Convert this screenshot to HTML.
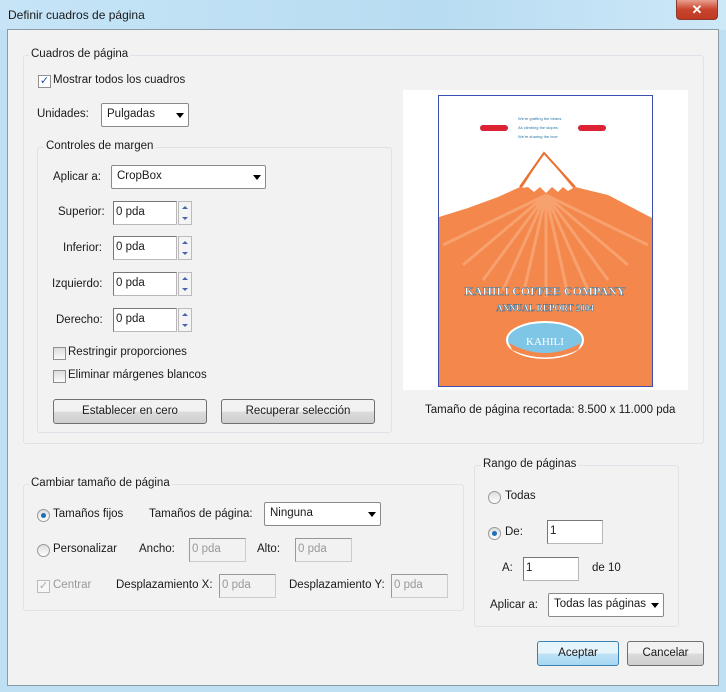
<!DOCTYPE html>
<html><head><meta charset="utf-8"><style>
*{box-sizing:border-box;margin:0;padding:0}
body{width:726px;height:692px;overflow:hidden;background:#bfe0f3;font-family:"Liberation Sans",sans-serif;font-size:11.5px;color:#1a1a1a;position:relative}
.a{position:absolute;white-space:nowrap}
.title{left:0;top:0;width:726px;height:30px;background:linear-gradient(90deg,#c6e4f6,#b8dcf2 60%,#cde8f7)}
.inner{left:7px;top:29px;width:712px;height:657px;background:#f2f2f2;border:1px solid #8a9aa6}
.grp{position:absolute;border:1px solid #dde3e8;border-radius:3px}
.lbl{position:absolute;background:#f2f2f2;padding:0 2px}
.sel{position:absolute;height:24px;background:#fff;border:1px solid #8a8a8a;border-radius:2px;padding:4px 5px}
.sel:after{content:"";position:absolute;right:4px;top:9px;border-left:4px solid transparent;border-right:4px solid transparent;border-top:5px solid #000}
.inp{position:absolute;height:24px;background:#fff;border:1px solid #b8b8b8;border-top-color:#777;border-left-color:#777;padding:4px 2px}
.dis{background:#f2f2f2;color:#999;border-color:#ccc;border-top-color:#999;border-left-color:#999}
.spin{position:absolute;width:14px;height:24px;border:1px solid #bbb;background:#f4f4f4}
.spin:before,.spin:after{content:"";position:absolute;left:3px;border-left:3px solid transparent;border-right:3px solid transparent}
.spin:before{top:4px;border-bottom:3px solid #46a}
.spin:after{bottom:4px;border-top:3px solid #46a}
.cb{position:absolute;width:13px;height:13px;border:1px solid #8f8f8f;background:linear-gradient(#ddd,#fafafa)}
.rd{position:absolute;width:13px;height:13px;border:1px solid #999;border-radius:50%;background:linear-gradient(#ddd,#fff)}
.rd.on:after{content:"";position:absolute;left:3px;top:3px;width:5px;height:5px;border-radius:50%;background:#1d6fb8}
.btn{position:absolute;height:25px;border:1px solid #707070;border-radius:3px;background:linear-gradient(#f2f2f2 50%,#dcdcdc 50%,#cfcfcf);text-align:center;line-height:23px}
</style></head><body>
<div class="a title"></div>
<div class="a" style="left:8px;top:8px;font-size:12px">Definir cuadros de página</div>
<div class="a" style="left:676px;top:0;width:42px;height:20px;background:linear-gradient(#e8a090,#c9442c 50%,#c03a22);border:1px solid #8a3a30;border-top:none;border-radius:0 0 4px 4px;color:#fff;text-align:center;font-weight:bold;font-size:13px;line-height:19px">✕</div>
<div class="a inner"></div>

<div class="grp" style="left:23px;top:55px;width:681px;height:389px"></div>
<div class="lbl" style="left:29px;top:48px">Cuadros de página</div>
<div class="cb" style="left:38px;top:75px;background:#fff;color:#1d4fa0;font-size:11px;line-height:11px;text-align:center">✓</div>
<div class="a" style="left:53px;top:74px">Mostrar todos los cuadros</div>
<div class="a" style="left:37px;top:108px">Unidades:</div>
<div class="sel" style="left:101px;top:103px;width:88px">Pulgadas</div>

<div class="grp" style="left:37px;top:147px;width:355px;height:286px"></div>
<div class="lbl" style="left:44px;top:140px">Controles de margen</div>
<div class="a" style="left:53px;top:171px">Aplicar a:</div>
<div class="sel" style="left:111px;top:165px;width:155px">CropBox</div>

<div class="a" style="left:58px;top:206px">Superior:</div>
<div class="inp" style="left:113px;top:201px;width:64px">0 pda</div><div class="spin" style="left:178px;top:201px"></div>
<div class="a" style="left:63px;top:242px">Inferior:</div>
<div class="inp" style="left:113px;top:236px;width:64px">0 pda</div><div class="spin" style="left:178px;top:236px"></div>
<div class="a" style="left:52px;top:278px">Izquierdo:</div>
<div class="inp" style="left:113px;top:272px;width:64px">0 pda</div><div class="spin" style="left:178px;top:272px"></div>
<div class="a" style="left:56px;top:314px">Derecho:</div>
<div class="inp" style="left:113px;top:308px;width:64px">0 pda</div><div class="spin" style="left:178px;top:308px"></div>

<div class="cb" style="left:53px;top:347px"></div><div class="a" style="left:68px;top:346px">Restringir proporciones</div>
<div class="cb" style="left:53px;top:370px"></div><div class="a" style="left:68px;top:369px">Eliminar márgenes blancos</div>
<div class="btn" style="left:53px;top:399px;width:154px">Establecer en cero</div>
<div class="btn" style="left:221px;top:399px;width:154px">Recuperar selección</div>

<div class="a" style="left:403px;top:90px;width:285px;height:300px;background:#fff"></div>
<svg class="a" style="left:438px;top:95px" width="215" height="292" viewBox="0 0 215 292">
<rect x="0.5" y="0.5" width="214" height="291" fill="#fff" stroke="#3a4fb0"/>
<path d="M1 122 L30 113 L60 102 L82 92 L106 58 L137 92 L170 100 L214 123 L214 291 L1 291Z" fill="#f4874b"/>
<path d="M84 93 L106 58 L135 93 L130 96 L125 92 L120 97 L114 92 L108 98 L102 92 L96 97 L90 92Z" fill="#fff"/>
<path d="M82 92 L106 58 L137 92" fill="none" stroke="#e8702f" stroke-width="2"/>
<g stroke="#f8a878" stroke-width="3" opacity=".8"><path d="M108 100 L5 150M108 100 L25 170M108 100 L45 185M108 100 L65 195M108 100 L85 200M108 100 L108 202M108 100 L130 200M108 100 L150 195M108 100 L170 185M108 100 L190 170M108 100 L210 150"/></g>
<g fill="#2a77a8" font-size="4"><text x="80" y="25">We're grafting the beans</text><text x="80" y="34">As climbing the slopes</text><text x="80" y="43">We're sharing the love</text></g>
<g fill="#d23"><rect x="42" y="30" width="28" height="6" rx="3"/><rect x="140" y="30" width="28" height="6" rx="3"/></g>
<text x="107" y="200" text-anchor="middle" fill="#fff" stroke="#2a6f9a" stroke-width=".4" font-family="Liberation Serif" font-size="12" font-weight="bold">KAHILI COFFEE COMPANY</text>
<text x="107" y="216" text-anchor="middle" fill="#fff" stroke="#2a6f9a" stroke-width=".4" font-family="Liberation Serif" font-size="9" font-weight="bold">ANNUAL REPORT 2004</text>
<ellipse cx="107" cy="245" rx="38" ry="18" fill="#7fc6e6" stroke="#fff" stroke-width="2"/>
<path d="M71 248 Q107 268 143 248 L140 255 Q107 270 74 255Z" fill="#f4874b"/>
<text x="107" y="250" text-anchor="middle" fill="#fff" font-family="Liberation Serif" font-size="11">KAHILI</text>
</svg>
<div class="a" style="left:425px;top:404px">Tamaño de página recortada: 8.500 x 11.000 pda</div>

<div class="grp" style="left:23px;top:484px;width:441px;height:127px"></div>
<div class="lbl" style="left:29px;top:477px">Cambiar tamaño de página</div>
<div class="rd on" style="left:37px;top:509px"></div><div class="a" style="left:53px;top:508px">Tamaños fijos</div>
<div class="a" style="left:149px;top:508px">Tamaños de página:</div>
<div class="sel" style="left:264px;top:502px;width:117px">Ninguna</div>
<div class="rd" style="left:37px;top:544px"></div><div class="a" style="left:53px;top:543px">Personalizar</div>
<div class="a" style="left:139px;top:543px">Ancho:</div><div class="inp dis" style="left:189px;top:538px;width:57px">0 pda</div>
<div class="a" style="left:257px;top:543px">Alto:</div><div class="inp dis" style="left:295px;top:538px;width:57px">0 pda</div>
<div class="cb" style="left:37px;top:580px;border-color:#bbb;color:#aaa;font-size:11px;line-height:11px;text-align:center;background:#f6f6f6">✓</div><div class="a" style="left:53px;top:579px;color:#999">Centrar</div>
<div class="a" style="left:116px;top:579px">Desplazamiento X:</div><div class="inp dis" style="left:219px;top:574px;width:57px">0 pda</div>
<div class="a" style="left:289px;top:579px">Desplazamiento Y:</div><div class="inp dis" style="left:391px;top:574px;width:57px">0 pda</div>

<div class="grp" style="left:474px;top:465px;width:205px;height:162px"></div>
<div class="lbl" style="left:481px;top:458px">Rango de páginas</div>
<div class="rd" style="left:488px;top:491px"></div><div class="a" style="left:505px;top:490px">Todas</div>
<div class="rd on" style="left:488px;top:527px"></div><div class="a" style="left:505px;top:526px">De:</div>
<div class="inp" style="left:547px;top:520px;width:56px">1</div>
<div class="a" style="left:502px;top:562px">A:</div>
<div class="inp" style="left:523px;top:557px;width:56px">1</div>
<div class="a" style="left:592px;top:562px">de 10</div>
<div class="a" style="left:490px;top:599px">Aplicar a:</div>
<div class="sel" style="left:548px;top:593px;width:116px">Todas las páginas</div>

<div class="btn" style="left:537px;top:641px;width:82px;border-color:#3c7fb1;background:linear-gradient(#e6f4fc 50%,#bfe2f6 50%,#a7d8f3)">Aceptar</div>
<div class="btn" style="left:627px;top:641px;width:77px">Cancelar</div>
</body></html>
